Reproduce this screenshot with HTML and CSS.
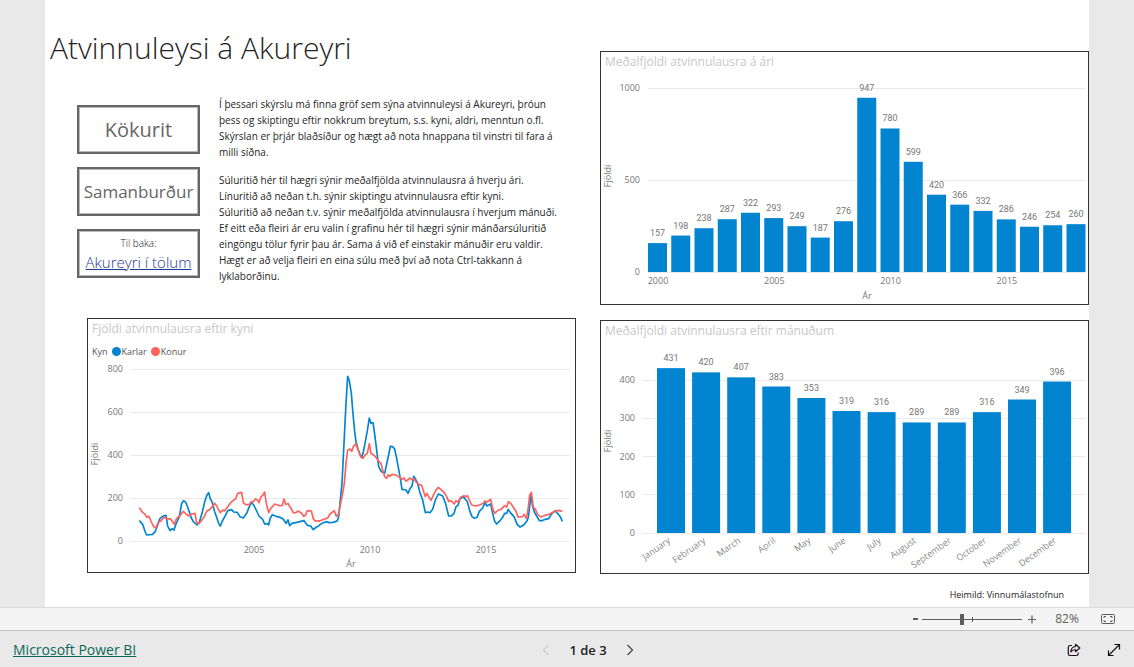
FILE: index.html
```html
<!DOCTYPE html>
<html lang="is">
<head>
<meta charset="utf-8">
<title>Atvinnuleysi á Akureyri</title>
<meta name="viewport" content="width=device-width, initial-scale=1">
<link rel="stylesheet" href="styles.css">
</head>
<body>
<main class="stage">
  <div class="report">
    <section class="column column-left">
      <h1 class="title">Atvinnuleysi á Akureyri</h1>
      <div class="intro">
        <nav class="nav">
          <button class="nav-box nav-large" type="button">Kökurit</button>
          <button class="nav-box" type="button">Samanburður</button>
          <div class="nav-box nav-back">
            <span class="nav-hint">Til baka:</span>
            <a class="nav-link" href="#">Akureyri í tölum</a>
          </div>
        </nav>
        <div class="copy">
          <p>Í þessari skýrslu má finna gröf sem sýna atvinnuleysi á Akureyri, þróun<br>þess og skiptingu eftir nokkrum breytum, s.s. kyni, aldri, menntun o.fl.<br>Skýrslan er þrjár blaðsíður og hægt að nota hnappana til vinstri til fara á<br>milli síðna.</p>
          <p>Súluritið hér til hægri sýnir meðalfjölda atvinnulausra á hverju ári.<br>Línuritið að neðan t.h. sýnir skiptingu atvinnulausra eftir kyni.<br>Súluritið að neðan t.v. sýnir meðalfjölda atvinnulausra í hverjum mánuði.<br>Ef eitt eða fleiri ár eru valin í grafinu hér til hægri sýnir mánðarsúluritið<br>eingöngu tölur fyrir þau ár. Sama á við ef einstakir mánuðir eru valdir.<br>Hægt er að velja fleiri en eina súlu með því að nota Ctrl-takkann á<br>lyklaborðinu.</p>
        </div>
      </div>
      <article class="card card-lines">
        <h2 class="card-title">Fjöldi atvinnulausra eftir kyni</h2>
        <div class="legend">
          <span class="legend-name">Kyn</span>
          <span class="legend-item"><i class="dot dot-blue"></i>Karlar</span>
          <span class="legend-item"><i class="dot dot-red"></i>Konur</span>
        </div>
        <svg class="chart" id="gender" viewBox="0 0 487 212"></svg>
      </article>
    </section>
    <section class="column column-right">
      <article class="card">
        <h2 class="card-title">Meðalfjöldi atvinnulausra á ári</h2>
        <svg class="chart" id="years" viewBox="0 0 487 230"></svg>
      </article>
      <article class="card">
        <h2 class="card-title">Meðalfjöldi atvinnulausra eftir mánuðum</h2>
        <svg class="chart" id="months" viewBox="0 0 487 230"></svg>
      </article>
      <p class="source">Heimild: Vinnumálastofnun</p>
    </section>
  </div>
</main>
<div class="zoombar">
  <button class="icon-button" type="button" aria-label="Zoom out"><svg width="5" height="12" viewBox="0 0 5 12"><path d="M0 6h5" stroke="#605e5c" stroke-width="2"/></svg></button>
  <input class="slider" type="range" min="0" max="100" value="40" aria-label="Zoom">
  <button class="icon-button" type="button" aria-label="Zoom in"><svg width="8" height="12" viewBox="0 0 8 12"><path d="M0 6.500h8M4 2.500v8" stroke="#605e5c" stroke-width="1.200"/></svg></button>
  <span class="percent">82%</span>
  <button class="icon-button" type="button" aria-label="Fit to page"><svg width="14" height="12" viewBox="0 0 14 12" fill="none" stroke="#605e5c"><rect x=".5" y="1.500" width="13" height="9" rx="1"/><path d="M5 3.500H3v1.500M9 3.500h2v1.500M5 8.500H3V7M9 8.500h2V7"/></svg></button>
</div>
<footer class="footer">
  <a class="brand" href="#">Microsoft Power BI</a>
  <div class="pager">
    <button class="icon-button" type="button" aria-label="Previous page" disabled><svg width="8" height="12" viewBox="0 0 8 12" fill="none" stroke="#bdbdbd"><path d="M6.500 1l-5 5 5 5"/></svg></button>
    <span class="page-count">1 de 3</span>
    <button class="icon-button" type="button" aria-label="Next page"><svg width="8" height="12" viewBox="0 0 8 12" fill="none" stroke="#444" stroke-width="1.200"><path d="M1.500 1l5 5-5 5"/></svg></button>
  </div>
  <div class="actions">
    <button class="icon-button" type="button" aria-label="Share"><svg width="14" height="14" viewBox="0 0 14 14" fill="none" stroke="#201020" stroke-width="1.200" stroke-linejoin="round"><path d="M5 2.500H3A1.700 1.700 0 0 0 1.300 4.200v6.600A1.700 1.700 0 0 0 3 12.500h6.500a1.700 1.700 0 0 0 1.700-1.700V9.500"/><path d="M8.500 1.300l4.300 3.700-4.300 3.700V6.500C6.200 6.500 5 7.200 3.800 9 4 5.800 5.500 3.700 8.500 3.500z"/></svg></button>
    <button class="icon-button" type="button" aria-label="Full screen"><svg width="14" height="14" viewBox="0 0 14 14" fill="none" stroke="#111" stroke-width="1.200"><path d="M1.500 12.500l11-11M7.500 1.500h5v5M1.500 7.500v5h5"/></svg></button>
  </div>
</footer>
<script src="charts.js"></script>
</body>
</html>
```
FILE: styles.css
```css
* { box-sizing: border-box; }
body {
  margin: 0;
  min-height: 100vh;
  display: flex;
  flex-direction: column;
  background: #e9e9e9;
  color: #252423;
  font-family: "Open Sans", "Noto Sans", sans-serif;
}
h1, h2, p { margin: 0; font-weight: 400; }
button { font: inherit; color: inherit; background: none; border: 0; padding: 0; }
svg { display: block; }

.stage { flex: 1; display: flex; padding: 0 45px; }
.report {
  flex: 1;
  display: grid;
  grid-template-columns: 531fr 489fr;
  column-gap: 24px;
  background: #fff;
}
.column { min-width: 0; display: flex; flex-direction: column; }
.column-right { padding-top: 51px; gap: 15px; }

.title {
  padding: 28px 0 28px 5px;
  font-size: 30px;
  line-height: 40px;
  font-weight: 300;
  white-space: nowrap;
}
.intro {
  display: grid;
  grid-template-columns: 123px 1fr;
  column-gap: 19px;
  margin: 0 0 34px 32px;
}
.nav { display: flex; flex-direction: column; gap: 13px; padding-top: 9px; }
.nav-box {
  height: 49px;
  border: 2px solid #666;
  outline: 1px solid #b8b8b8;
  outline-offset: -3px;
  color: #666;
  font-size: 17px;
  line-height: 24px;
  white-space: nowrap;
}
.nav-large { font-size: 20px; }
.nav-back {
  display: flex;
  flex-direction: column;
  align-items: center;
  justify-content: center;
  font-weight: 300;
}
.nav-hint { font-size: 10px; line-height: 16px; color: #252423; }
.nav-link { font-size: 15px; line-height: 22px; color: #1f3a93; text-decoration: underline; }
.copy {
  display: flex;
  flex-direction: column;
  gap: 12px;
  font-size: 10px;
  line-height: 16px;
  white-space: nowrap;
}

.card { border: 1px solid #333; background: #fff; }
.card-lines { margin-left: 42px; }
.card-title {
  padding-left: 4px;
  height: 22px;
  font-size: 12px;
  line-height: 20px;
  color: #c8c8c8;
  white-space: nowrap;
}
.legend {
  display: flex;
  align-items: center;
  gap: 4px;
  height: 19px;
  padding: 2px 0 0 4px;
  font-size: 9px;
  color: #555;
}
.legend-item { display: flex; align-items: center; gap: 1px; }
.dot { width: 9px; height: 9px; border-radius: 50%; }
.dot-blue { background: #0284d0; }
.dot-red { background: #fd625e; }

.chart { width: 100%; height: auto; font-size: 9px; fill: #777; }
.grid { stroke: #eaeaea; stroke-width: 1; }
.bar { fill: #0284d0; }
.value { font-family: Roboto, sans-serif; text-anchor: middle; }
.tick-y { text-anchor: end; }
.tick-x, .axis { text-anchor: middle; }
.month { text-anchor: end; fill: #888; }
.line { fill: none; stroke-width: 5; stroke-linejoin: round; }
.line-blue { stroke: #0284d0; }
.line-red { stroke: #fd625e; }

.source { padding-right: 25px; font-size: 9px; line-height: 12px; text-align: right; }

.icon-button { display: flex; align-items: center; }
.zoombar {
  display: flex;
  align-items: center;
  justify-content: flex-end;
  height: 23px;
  padding-right: 19px;
  background: #f4f4f4;
  border-top: 1px solid #dcdcdc;
}
.slider {
  appearance: none;
  width: 100px;
  height: 12px;
  margin: 0 6px 0 4px;
  background:
    linear-gradient(#605e5c, #605e5c) 50px 4px / 1px 5px no-repeat,
    linear-gradient(#605e5c, #605e5c) 0 6px / 100% 1px no-repeat;
}
.slider::-webkit-slider-thumb { appearance: none; width: 4px; height: 11px; background: #605e5c; }
.percent {
  width: 36px;
  margin: 0 16px 0 13px;
  font-size: 12px;
  line-height: 16px;
  color: #605e5c;
  text-align: center;
}

.footer {
  display: grid;
  grid-template-columns: 1fr auto 1fr;
  align-items: center;
  height: 37px;
  padding: 2px 13px 0;
  border-top: 1px solid #c4c4c4;
}
.brand { justify-self: start; font-size: 14px; line-height: 18px; color: #0c695a; text-decoration: underline; }
.pager { display: flex; align-items: center; gap: 19px; padding-left: 42px; }
.page-count { font-size: 13px; line-height: 18px; font-weight: 600; color: #222; }
.actions { display: flex; gap: 26px; justify-self: end; }
```
FILE: charts.js
```js
const NS = "http://www.w3.org/2000/svg";

function add(parent, name, attrs, text) {
  const node = document.createElementNS(NS, name);
  for (const key in attrs) node.setAttribute(key, attrs[key]);
  if (text !== undefined) node.textContent = text;
  parent.appendChild(node);
  return node;
}

function axis(svg, o) {
  for (const tick of o.ticks) {
    const y = o.zero - tick * o.unit;
    add(svg, "line", { class: "grid", x1: o.left, x2: o.right, y1: Math.floor(y) + 0.5, y2: Math.floor(y) + 0.5 });
    add(svg, "text", { class: "tick-y", x: o.left - 8, y: y + 3 }, tick);
  }
  add(svg, "text", { class: "axis", transform: `translate(10 ${o.nameY}) rotate(-90)` }, "Fjöldi");
}

function bars(svg, o) {
  o.data.forEach((value, i) => {
    const x = o.first + i * o.step;
    const height = value * o.unit;
    add(svg, "rect", { class: "bar", x, y: o.zero - height, width: o.width, height });
    add(svg, "text", { class: "value", x: x + o.width / 2, y: o.zero - height - 7 }, value);
  });
}

const years = document.getElementById("years");
const yearScale = {
  zero: 198, unit: 0.184, left: 47, right: 484, nameY: 102, ticks: [0, 500, 1000],
  first: 47, step: 23.25, width: 19,
  data: [157, 198, 238, 287, 322, 293, 249, 187, 276, 947, 780, 599, 420, 366, 332, 286, 246, 254, 260]
};
axis(years, yearScale);
bars(years, yearScale);
[2000, 2005, 2010, 2015].forEach((year, i) => add(years, "text", { class: "tick-x", x: 57 + i * 116.3, y: 210 }, year));
add(years, "text", { class: "axis", x: 266, y: 225 }, "Ár");

const months = document.getElementById("months");
const monthScale = {
  zero: 190, unit: 0.3825, left: 42, right: 484, nameY: 98, ticks: [0, 100, 200, 300, 400],
  first: 56, step: 35.1, width: 28,
  data: [431, 420, 407, 383, 353, 319, 316, 289, 289, 316, 349, 396]
};
axis(months, monthScale);
bars(months, monthScale);
["January", "February", "March", "April", "May", "June", "July", "August", "September", "October", "November", "December"]
  .forEach((name, i) => add(months, "text", { class: "month", transform: `translate(${70 + i * 35.1} 199) rotate(-35)` }, name));

const gender = document.getElementById("gender");
axis(gender, { zero: 181, unit: 0.2145, left: 43, right: 482, nameY: 94, ticks: [0, 200, 400, 600, 800] });
[2005, 2010, 2015].forEach((year, i) => add(gender, "text", { class: "tick-x", x: 166 + i * 116, y: 193 }, year));
add(gender, "text", { class: "axis", x: 263, y: 207 }, "Ár");

// Each series has an early part and a late part; the late part's x starts at SPLIT.
const SPLIT = 720;
const series = {
  blue: [
    "178,632 188,643 195,664 200,675 218,673 226,664 233,645 240,625 250,618 258,616 263,648 270,662 276,656 282,660 288,642 298,620 305,580 311,572 318,578 326,600 334,624 340,635 351,645 358,637 366,610 375,572 381,555 386,548 391,566 397,578 404,605 411,625 416,640 421,648 427,633 436,617 443,602 455,599 461,606 472,607 480,620 490,624 500,610 508,590 514,577 521,585 530,603 537,618 548,628 554,642 562,641 566,645 571,624 577,614 584,617 592,620 600,622 610,628 618,640 624,630 629,647 636,640 650,637 672,632 682,646 692,648 700,659 708,652 716,648",
    "0,644 6,640 18,635 28,638 38,637 46,635 52,632 56,620 60,580 66,520 72,400 78,280 83,199 88,212 94,250 98,300 104,365 108,395 115,420 122,438 125,443 130,425 136,395 142,362 148,324 153,340 159,338 163,365 169,412 176,470 184,485 194,490 200,462 206,435 211,409 218,410 224,417 230,445 236,478 241,505 246,538 258,540 264,550 270,536 276,528 281,499 287,508 293,520 299,545 308,570 316,608 322,606 330,608 338,598 346,570 355,552 368,558 376,578 386,618 394,618 402,610 408,590 414,586 420,566 430,560 442,575 450,605 456,620 463,625 471,622 478,604 488,594 495,578 501,588 512,582 518,610 524,634 530,642 540,632 548,622 554,610 560,610 565,598 571,608 582,620 592,644 600,651 612,644 620,634 625,622 630,580 633,556 638,590 644,608 650,618 658,632 666,632 676,628 686,626 694,612 706,602 714,612 722,622 727,634"
  ],
  red: [
    "178,593 187,606 196,614 200,622 207,619 214,636 221,650 228,653 235,637 242,634 252,621 262,627 271,626 277,634 283,643 290,625 300,617 310,604 318,612 326,618 334,612 345,610 350,638 358,640 370,625 380,604 390,598 397,590 404,580 410,588 416,600 421,608 428,600 433,603 442,592 452,578 460,571 467,567 473,550 485,547 490,578 497,584 508,583 514,575 520,575 526,567 533,570 537,578 543,560 549,555 554,546 559,580 566,608 572,596 584,582 598,587 607,586 612,567 618,584 624,580 632,594 641,609 648,608 654,603 664,609 671,619 677,615 682,602 694,603 700,626 706,634 712,632 718,634",
    "0,632 8,629 24,623 30,612 43,602 49,619 55,614 60,590 67,555 73,520 78,460 83,420 90,417 95,424 101,408 108,402 114,418 122,440 129,445 135,435 142,430 148,401 153,430 160,434 168,442 174,452 183,460 188,480 194,500 200,505 205,494 210,499 216,493 228,495 234,500 240,502 246,508 252,504 258,514 270,504 276,510 282,506 290,518 298,524 305,526 311,545 316,560 321,550 327,562 333,571 340,556 348,540 355,532 363,539 372,547 380,560 386,575 392,571 403,582 408,572 414,576 422,562 432,557 437,560 442,557 448,570 455,585 468,588 480,584 490,580 495,573 501,576 512,568 518,595 524,610 535,600 543,598 554,587 560,591 565,575 572,580 580,592 588,604 594,621 608,620 612,613 619,625 624,600 629,555 634,547 640,592 646,597 652,612 662,621 672,617 684,614 696,608 706,604 716,601 727,604"
  ]
};
const plot = add(gender, "svg", { x: 0, y: 0, width: 487, height: 212, viewBox: "24 150 1461 636" });
for (const name in series) {
  const late = series[name][1].split(" ").map(pair => {
    const [x, y] = pair.split(",");
    return `${Number(x) + SPLIT},${y}`;
  });
  add(plot, "polyline", { class: `line line-${name}`, points: series[name][0] + " " + late.join(" ") });
}
```
